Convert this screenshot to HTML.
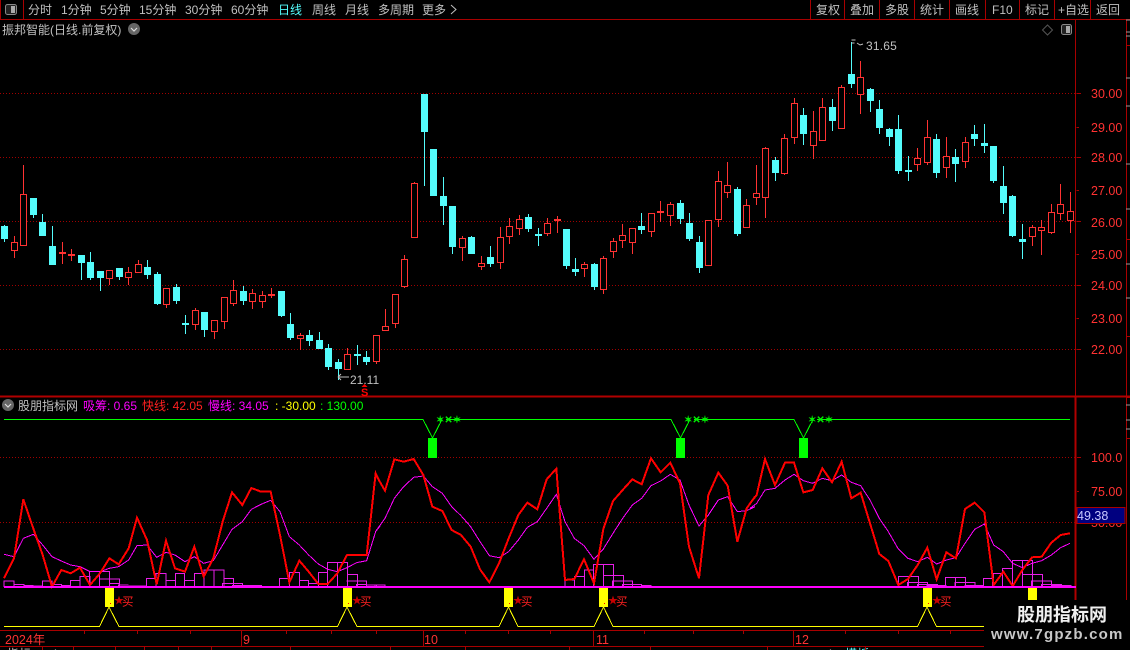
<!DOCTYPE html>
<html lang="zh">
<head>
<meta charset="utf-8">
<title>股朋指标网</title>
<style>
html,body{margin:0;padding:0;background:#000;width:1130px;height:650px;overflow:hidden}
svg{display:block;font-family:"Liberation Sans","Noto Sans CJK SC",sans-serif}
.s{shape-rendering:crispEdges}
.t{font-size:12px;fill:#c0c0c0}
.r{font-size:12px;fill:#ff3232}
</style>
</head>
<body>
<svg width="1130" height="650" viewBox="0 0 1130 650" xmlns="http://www.w3.org/2000/svg">
<rect width="1130" height="650" fill="#000"/>
<!-- bottom clipped row -->
<text class="t" x="7" y="658">指标</text>
<text class="t" x="51" y="658" style="font-size:10px">主</text>
<text class="t" x="845" y="658" style="fill:#54fcfc">模板</text>
<text class="t" x="826" y="658" style="font-size:10px">主</text>
<!-- frame lines -->
<g class="s" fill="none" stroke="#a80000" stroke-width="1">
<path d="M0 19.5H1130M23.500 0V19M810.500 0V19M844.500 0V19M879.500 0V19M914.500 0V19M949.500 0V19M985.500 0V19M1019.500 0V19M1054.500 0V19M1090.500 0V19M1126.500 19V650"/>
<path d="M1075.500 19V396"/>
<path d="M0 630.500H1126M0 646.500H1126"/>
<path d="M0.500 0V19"/>
<path d="M1076.500 93.500H1081M1076.500 127.500H1079M1076.500 157.500H1081M1076.500 190.500H1079M1076.500 221.500H1081M1076.500 254.500H1079M1076.500 285.500H1081M1076.500 318.500H1079M1076.500 349.500H1081M1077 457.500H1081M1077 491.500H1079"/>
<path d="M1126 45.500H1130M1126 239.500H1130M1126 336.500H1130M1126 397.500H1130M1126 438.500H1130"/>
<path d="M84.500 630V634M137.500 630V634M190.500 630V634M241.500 630V646M286.500 630V634M331.500 630V634M376.500 630V634M423.500 630V646M465.500 630V634M508.500 630V634M550.500 630V634M593.500 630V646M644.500 630V634M693.500 630V634M743.500 630V634M793.500 630V646M845.500 630V634M898.500 630V634M950.500 630V634M42.500 646V650M73.500 646V650M115.500 646V650M144.500 646V650M178.500 646V650M211.500 646V650M290.500 646V650M390.500 646V650M465.500 646V650M569.500 646V650M650.500 646V650M767.500 646V650M865.500 646V650"/>
</g>
<path class="s" d="M0 396.500H1130M1075.500 396V600" stroke="#b00000" stroke-width="2" fill="none"/>
<path class="s" d="M1126 20h4M1126 32h4M1126 36h4M1126 78h4M1126 106h4M1126 164h4M1126 209h4M1126 264h4M1126 298h4M1126 405h4M1126 420h4M1126 429h4" stroke="#999" stroke-width="1" fill="none"/>
<!-- dotted grid -->
<path class="s" d="M0 93.500H1076M0 157.500H1076M0 221.500H1076M0 285.500H1076M0 349.500H1076M0 457.500H1076M0 522.500H1076" stroke="#a00000" stroke-width="1" stroke-dasharray="1 2" fill="none"/>

<!-- toolbar -->
<rect x="5.500" y="4.500" width="11" height="10" rx="2" fill="#222" stroke="#888"/>
<rect class="s" x="11" y="6" width="4" height="7" fill="#aaa"/>
<g class="t">
<text x="28" y="14">分时</text><text x="61" y="14">1分钟</text><text x="100" y="14">5分钟</text>
<text x="139" y="14">15分钟</text><text x="185" y="14">30分钟</text><text x="231" y="14">60分钟</text>
<text x="278" y="14" style="fill:#54fcfc">日线</text><text x="312" y="14">周线</text><text x="345" y="14">月线</text>
<text x="378" y="14">多周期</text><text x="422" y="14">更多</text>
<text x="816" y="14">复权</text><text x="850" y="14">叠加</text><text x="885" y="14">多股</text>
<text x="920" y="14">统计</text><text x="955" y="14">画线</text><text x="992" y="14">F10</text>
<text x="1025" y="14">标记</text><text x="1058" y="14">+自选</text><text x="1096" y="14">返回</text>
</g>
<path d="M451 5l5 4.500-5 4.500" fill="none" stroke="#c0c0c0"/>
<text class="t" x="2" y="34">振邦智能(日线.前复权)</text>
<circle cx="134" cy="29" r="6" fill="#666"/>
<path d="M131 28l3 3 3-3" fill="none" stroke="#ddd" stroke-width="1.200"/>
<path d="M1047.500 25l5 5-5 5-5-5z" fill="none" stroke="#555"/>
<rect x="1061.500" y="24.500" width="10" height="10" rx="2" fill="#222" stroke="#888"/>
<rect class="s" x="1066" y="26" width="4" height="7" fill="#aaa"/>

<!-- axis labels main -->
<g class="r" style="font-size:12.500px">
<text x="1091" y="98">30.00</text><text x="1091" y="132">29.00</text><text x="1091" y="162">28.00</text>
<text x="1091" y="195">27.00</text><text x="1091" y="227">26.00</text><text x="1091" y="259">25.00</text>
<text x="1091" y="290">24.00</text><text x="1091" y="323">23.00</text><text x="1091" y="354">22.00</text>
<text x="1091" y="462">100.0</text><text x="1091" y="496">75.00</text><text x="1091" y="527">50.00</text>
</g>
<rect class="s" x="1077" y="507.500" width="48" height="16" fill="#000080" stroke="#a80000"/>
<text x="1077" y="520" font-size="12.500" fill="#c8c8ff">49.38</text>

<!-- candles: red -->
<path class="s" fill="none" stroke="#ff3232" stroke-width="1" d="M14.500 236V258M23.500 165V246M109.500 270V285M128.500 267V285M138.500 260V273M166.500 288V308M195.500 308V330M214.500 320V339M224.500 297V329M233.500 280V306M252.500 289V309M262.500 291V308M300.500 333V350M347.500 348V370M376.500 335V364M385.500 309V331M395.500 294V328M404.500 255V288M414.500 182V238M462.500 236V261M481.500 256V270M500.500 227V269M509.500 218V244M519.500 215V235M547.500 218V236M584.500 262V277M603.500 256V294M613.500 238V258M622.500 224V248M632.500 228V254M651.500 213V237M670.500 202V226M708.500 220V266M718.500 171V227M727.500 162V198M746.500 199V228M756.500 165V205M765.500 147V218M784.500 134V175M794.500 98V144M813.500 111V159M822.500 98V141M841.500 85V129M860.500 61V114M917.500 148V171M927.500 120V165M946.500 137V178M965.500 137V168M1032.500 225V246M1041.500 220V255M1051.500 204V234M1060.500 184V220M1070.500 192V233M62.500 242V264M71.500 249V261M271.500 288V298M557.500 216V233M660.500 201V222"/>
<path class="s" fill="#000" stroke="#ff3232" stroke-width="1" d="M11.500 242.500h6v8h-6zM20.500 194.500h6v51h-6zM106.500 270.500h6v8h-6zM125.500 272.500h6v5h-6zM135.500 264.500h6v8h-6zM163.500 288.500h6v16h-6zM192.500 310.500h6v14h-6zM211.500 320.500h6v11h-6zM221.500 297.500h6v24h-6zM230.500 290.500h6v13h-6zM249.500 293.500h6v8h-6zM259.500 295.500h6v6h-6zM297.500 335.500h6v3h-6zM344.500 354.500h6v15h-6zM373.500 335.500h6v26h-6zM382.500 326.500h6v4h-6zM392.500 294.500h6v29h-6zM401.500 259.500h6v27h-6zM411.500 183.500h6v54h-6zM459.500 238.500h6v9h-6zM478.500 263.500h6v3h-6zM497.500 237.500h6v25h-6zM506.500 226.500h6v10h-6zM516.500 219.500h6v9h-6zM544.500 223.500h6v10h-6zM581.500 264.500h6v4h-6zM600.500 258.500h6v31h-6zM610.500 241.500h6v10h-6zM619.500 235.500h6v5h-6zM629.500 228.500h6v14h-6zM648.500 213.500h6v18h-6zM667.500 204.500h6v11h-6zM705.500 220.500h6v45h-6zM715.500 181.500h6v38h-6zM724.500 185.500h6v7h-6zM743.500 205.500h6v22h-6zM753.500 193.500h6v4h-6zM762.500 148.500h6v49h-6zM781.500 138.500h6v35h-6zM791.500 103.500h6v34h-6zM810.500 131.500h6v14h-6zM819.500 107.500h6v33h-6zM838.500 87.500h6v41h-6zM857.500 77.500h6v17h-6zM914.500 158.500h6v6h-6zM924.500 137.500h6v25h-6zM943.500 156.500h6v11h-6zM962.500 142.500h6v19h-6zM1029.500 227.500h6v9h-6zM1038.500 227.500h6v3h-6zM1048.500 212.500h6v20h-6zM1057.500 204.500h6v9h-6zM1067.500 211.500h6v9h-6z"/>
<path class="s" fill="#ff3232" d="M59 252h7v2h-7zM68 254h7v2h-7zM268 294h7v2h-7zM554 219h7v2h-7zM657 211h7v2h-7z"/>

<!-- candles: cyan -->
<path class="s" fill="none" stroke="#54fcfc" stroke-width="1" d="M4.500 225V242M33.500 198V218M42.500 214V236M52.500 226V265M81.500 255V280M90.500 252V280M100.500 271V291M119.500 268V280M147.500 260V279M157.500 272V305M176.500 284V304M185.500 315V334M204.500 312V337M243.500 286V305M281.500 291V317M290.500 313V340M309.500 330V346M319.500 332V349M328.500 344V370M338.500 359V380M357.500 345V365M366.500 351V365M424.500 94V186M443.500 177V225M452.500 206V254M471.500 236V254M490.500 246V267M528.500 214V232M538.500 228V246M566.500 229V269M575.500 258V276M594.500 263V290M641.500 213V234M680.500 200V224M689.500 213V241M699.500 236V273M737.500 187V236M775.500 157V181M803.500 108V145M832.500 99V131M851.500 42V88M870.500 88V112M879.500 100V134M889.500 128V146M898.500 115V174M908.500 156V181M936.500 134V178M955.500 149V182M974.500 125V146M984.500 124V153M993.500 146V183M1003.500 166V214M1012.500 195V237M1022.500 224V259"/>
<path class="s" fill="#54fcfc" d="M1 226h7v13h-7zM30 198h7v17h-7zM39 222h7v14h-7zM49 246h7v19h-7zM78 255h7v8h-7zM87 262h7v16h-7zM97 271h7v7h-7zM116 268h7v9h-7zM144 267h7v8h-7zM154 274h7v30h-7zM173 287h7v14h-7zM182 323h7v2h-7zM201 312h7v18h-7zM240 291h7v10h-7zM278 291h7v25h-7zM287 324h7v14h-7zM306 335h7v6h-7zM316 340h7v9h-7zM325 348h7v19h-7zM335 362h7v7h-7zM354 354h7v2h-7zM363 357h7v5h-7zM421 94h7v38h-7zM430 149h7v47h-7zM440 196h7v10h-7zM449 206h7v41h-7zM468 237h7v17h-7zM487 257h7v7h-7zM525 217h7v12h-7zM535 234h7v2h-7zM563 229h7v37h-7zM572 269h7v3h-7zM591 264h7v23h-7zM638 226h7v4h-7zM677 203h7v16h-7zM686 223h7v16h-7zM696 242h7v26h-7zM734 189h7v45h-7zM772 160h7v13h-7zM800 115h7v19h-7zM829 107h7v14h-7zM848 74h7v10h-7zM867 89h7v12h-7zM876 109h7v19h-7zM886 129h7v8h-7zM895 129h7v42h-7zM905 170h7v2h-7zM933 139h7v34h-7zM952 157h7v7h-7zM971 134h7v5h-7zM981 143h7v3h-7zM990 146h7v35h-7zM1000 186h7v17h-7zM1009 196h7v40h-7zM1019 239h7v3h-7z"/>

<!-- extremes -->
<path d="M851.500 40h4M851.500 43h3M857 43l3 2 3-1" fill="none" stroke="#c0c0c0"/>
<text class="t" x="866" y="50" letter-spacing=".2">31.65</text>
<path d="M338 377h11M338 377l3-3M338 377l3 3" fill="none" stroke="#c0c0c0"/>
<text class="t" x="350" y="384">21.11</text>
<path d="M364.500 384l3 3h-6z" fill="#f00"/>
<text x="361" y="396" font-size="11" font-weight="bold" fill="#f00">S</text>

<!-- legend -->
<circle cx="8" cy="405" r="6" fill="#666"/>
<path d="M5 404l3 3 3-3" fill="none" stroke="#ddd" stroke-width="1.200"/>
<text class="t" x="18" y="410">股朋指标网</text>
<text class="t" x="83" y="410" style="fill:#f0f">吸筹: 0.65</text>
<text class="t" x="142" y="410" style="fill:#ff2020">快线: 42.05</text>
<text class="t" x="208" y="410" style="fill:#f0f">慢线: 34.05</text>
<text class="t" x="275" y="410" style="fill:#ff0">: -30.00</text>
<text class="t" x="320" y="410" style="fill:#0f0">: 130.00</text>

<!-- indicator: fixed lines -->
<path class="s" d="M4 419.500H423L432.500 438L442 419.500M446 419.500H671L680.500 438L690 419.500M694 419.500H794L803.500 438L813 419.500M817 419.500H1070" fill="none" stroke="#0f0" stroke-width="1"/>
<g fill="#00f000" font-size="10" font-weight="bold"><text x="436" y="423">✶✕✶</text><text x="684" y="423">✶✕✶</text><text x="808" y="423">✶✕✶</text></g>
<path class="s" fill="#0f0" d="M428 438h9v20h-9zM676 438h9v20h-9zM799 438h9v20h-9z"/>

<!-- yellow -->
<path class="s" d="M4 626.500H99.500L109 607L119 626.500H337.500L347 607L357 626.500H499L508.500 607L518 626.500H594L603.500 607L613 626.500H917.500L927 607L936.500 626.500H984" fill="none" stroke="#ff0" stroke-width="1"/>
<path class="s" fill="#ff0" d="M105 587h9v20h-9zM343 587h9v20h-9zM504 587h9v20h-9zM599 587h9v20h-9zM923 587h9v20h-9zM1028 587h9v14h-9z"/>
<path class="s" fill="#f00" d="M110 603h1v1h-1zM348 603h1v1h-1zM509 603h1v1h-1zM604 603h1v1h-1zM928 603h1v1h-1z"/>
<g font-size="10" fill="#c80000"><text x="114" y="604">★</text><text x="352" y="604">★</text><text x="513" y="604">★</text><text x="608" y="604">★</text><text x="932" y="604">★</text></g>
<g font-size="11.500" fill="#ff2020"><text x="122" y="605.500">买</text><text x="360" y="605.500">买</text><text x="521" y="605.500">买</text><text x="616" y="605.500">买</text><text x="940" y="605.500">买</text></g>

<!-- histogram, lines -->
<g class="s" fill="none" transform="translate(0 395) scale(.33333)">
<path stroke="#e81ee8" stroke-width="3" d="M12 576V558H42V576M42 576V568H72V576M72 576V572H100M100 576V573H128M128 576V558H156V576M156 576V568H184V576M184 576V572H212M212 576V556H240V576M240 576V544H270V576M268 576V530H298V576M298 576V530H328V576M298 552H358V576M328 565H358M356 576V570H386M386 573H440M440 576V550H468V576M468 576V535H498V576M498 576V556H526V576M526 576V535H554V576M554 576V556H583V576M583 576V535H612V576M612 576V525H642V576M642 576V525H672V576M672 550H700V576M668 576V565H728V576M698 576V572H786M838 576V550H868V576M868 576V532H898V576M898 576V556H926V576M926 576V565H955V576M955 576V532H983V576M983 576V502H1012V576M1012 576V502H1042V576M1042 576V538H1072V576M1040 558H1100V576M1070 576V568H1100M1100 576V570H1130V576"/>
<path stroke="#f0f" stroke-width="3" d="M12 478L42 485L70 430L100 418L128 450L156 485L184 498L212 510L240 515L270 530L300 530L328 520L356 515L386 495L411 452L441 450L470 487L498 472L525 480L555 500L583 485L611 505L640 497L668 450L696 403L727 380L754 343L783 328L812 316L840 350L868 425L898 450L926 480L955 507L983 523L1012 530L1041 518L1070 503L1100 497L1127 410L1140 393"/>
<path stroke="#ff0000" stroke-width="6" d="M12 550L42 490L70 313L98 395L128 480L156 575L184 525L212 535L240 518L270 570L300 535L328 490L356 508L386 460L411 368L441 435L470 568L498 437L525 520L555 530L583 455L611 545L640 490L668 380L696 292L727 330L754 279L783 290L812 290L840 420L868 562L898 497L926 530L955 567L983 567L1012 535L1041 480L1100 480L1127 235L1140 262"/>
</g>
<g class="s" fill="none" transform="translate(375 395) scale(.33333)">
<path stroke="#e81ee8" stroke-width="3" d="M0 576V570H30V576M570 576V555H598V576M598 576V545H628V576M628 576V525H656V576M656 576V508H686V576M686 576V508H716V576M684 541H745V576M712 576V558H772V576M742 576V568H800V576M800 576V572H830"/>
<path stroke="#f0f" stroke-width="3" d="M0 412L30 370L58 310L86 275L116 247L145 243L172 275L202 295L230 335L258 362L287 395L315 440L343 482L372 488L401 470L430 435L457 397L487 380L515 340L544 298L570 380L598 430L627 452L657 493L685 462L714 415L743 370L772 330L800 310L828 272L857 258L886 238L915 255L942 330L972 393L1000 360L1030 315L1058 305L1087 350L1115 347L1140 335"/>
<path stroke="#ff0000" stroke-width="6" d="M0 235L30 287L58 193L86 200L116 192L145 240L172 335L202 348L230 405L258 420L287 455L315 523L343 562L372 505L401 430L430 360L457 323L487 343L515 253L544 221L570 555L598 552L627 493L657 565L685 402L714 318L743 285L772 253L800 268L828 190L857 232L886 203L915 265L942 455L972 550L1000 300L1030 233L1058 272L1087 440L1115 340L1140 305"/>
</g>
<g class="s" fill="none" transform="translate(750 395) scale(.33333)">
<path stroke="#e81ee8" stroke-width="3" d="M445 576V544H475V576M475 576V544H505V576M472 576V562H532V576M502 576V568H562V576M530 572H590M587 576V547H617V576M617 576V547H647V576M615 576V562H675V576M645 576V572H700M700 576V550H728V576M730 576V535H758V576M758 576V520H788V576M788 576V496H818V576M818 576V496H848V576M818 538H878V576M845 576V558H905V576M875 576V568H935V576M905 576V571H965"/>
<path stroke="#f0f" stroke-width="3" d="M0 340L20 325L45 285L75 280L105 255L132 238L160 257L188 265L217 250L246 257L275 240L304 262L332 272L360 315L388 370L415 410L445 462L474 490L503 500L532 487L560 507L589 495L618 488L645 445L674 403L703 387L731 450L760 470L788 505L817 518L846 505L875 497L904 480L932 458L960 445"/>
<path stroke="#ff0000" stroke-width="6" d="M0 325L20 300L45 192L75 270L105 203L132 203L160 292L188 285L217 220L246 262L275 200L304 310L332 293L360 385L388 477L415 498L445 570L474 552L503 510L532 458L560 553L589 472L618 490L645 342L674 323L703 352L731 570L760 530L788 573L817 525L846 487L875 485L904 443L932 420L960 415"/>
</g>
<path class="s" d="M4 587H1076" stroke="#f0f" stroke-width="2" fill="none"/>

<!-- time axis text -->
<g class="r" style="font-size:12.500px">
<text x="5" y="644">2024年</text><text x="243" y="644">9</text><text x="424" y="644">10</text><text x="596" y="644">11</text><text x="795" y="644">12</text>
</g>

<!-- watermark -->
<rect class="s" x="984" y="600" width="146" height="50" fill="#000"/>
<text x="1017" y="621" font-size="18" font-weight="bold" fill="#f0f0f0" style="font-family:'Noto Sans CJK SC',sans-serif">股朋指标网</text>
<text x="991" y="639" font-size="15" font-weight="bold" fill="#c8c8c8" letter-spacing="1.200">www.7gpzb.com</text>
</svg>
</body>
</html>
